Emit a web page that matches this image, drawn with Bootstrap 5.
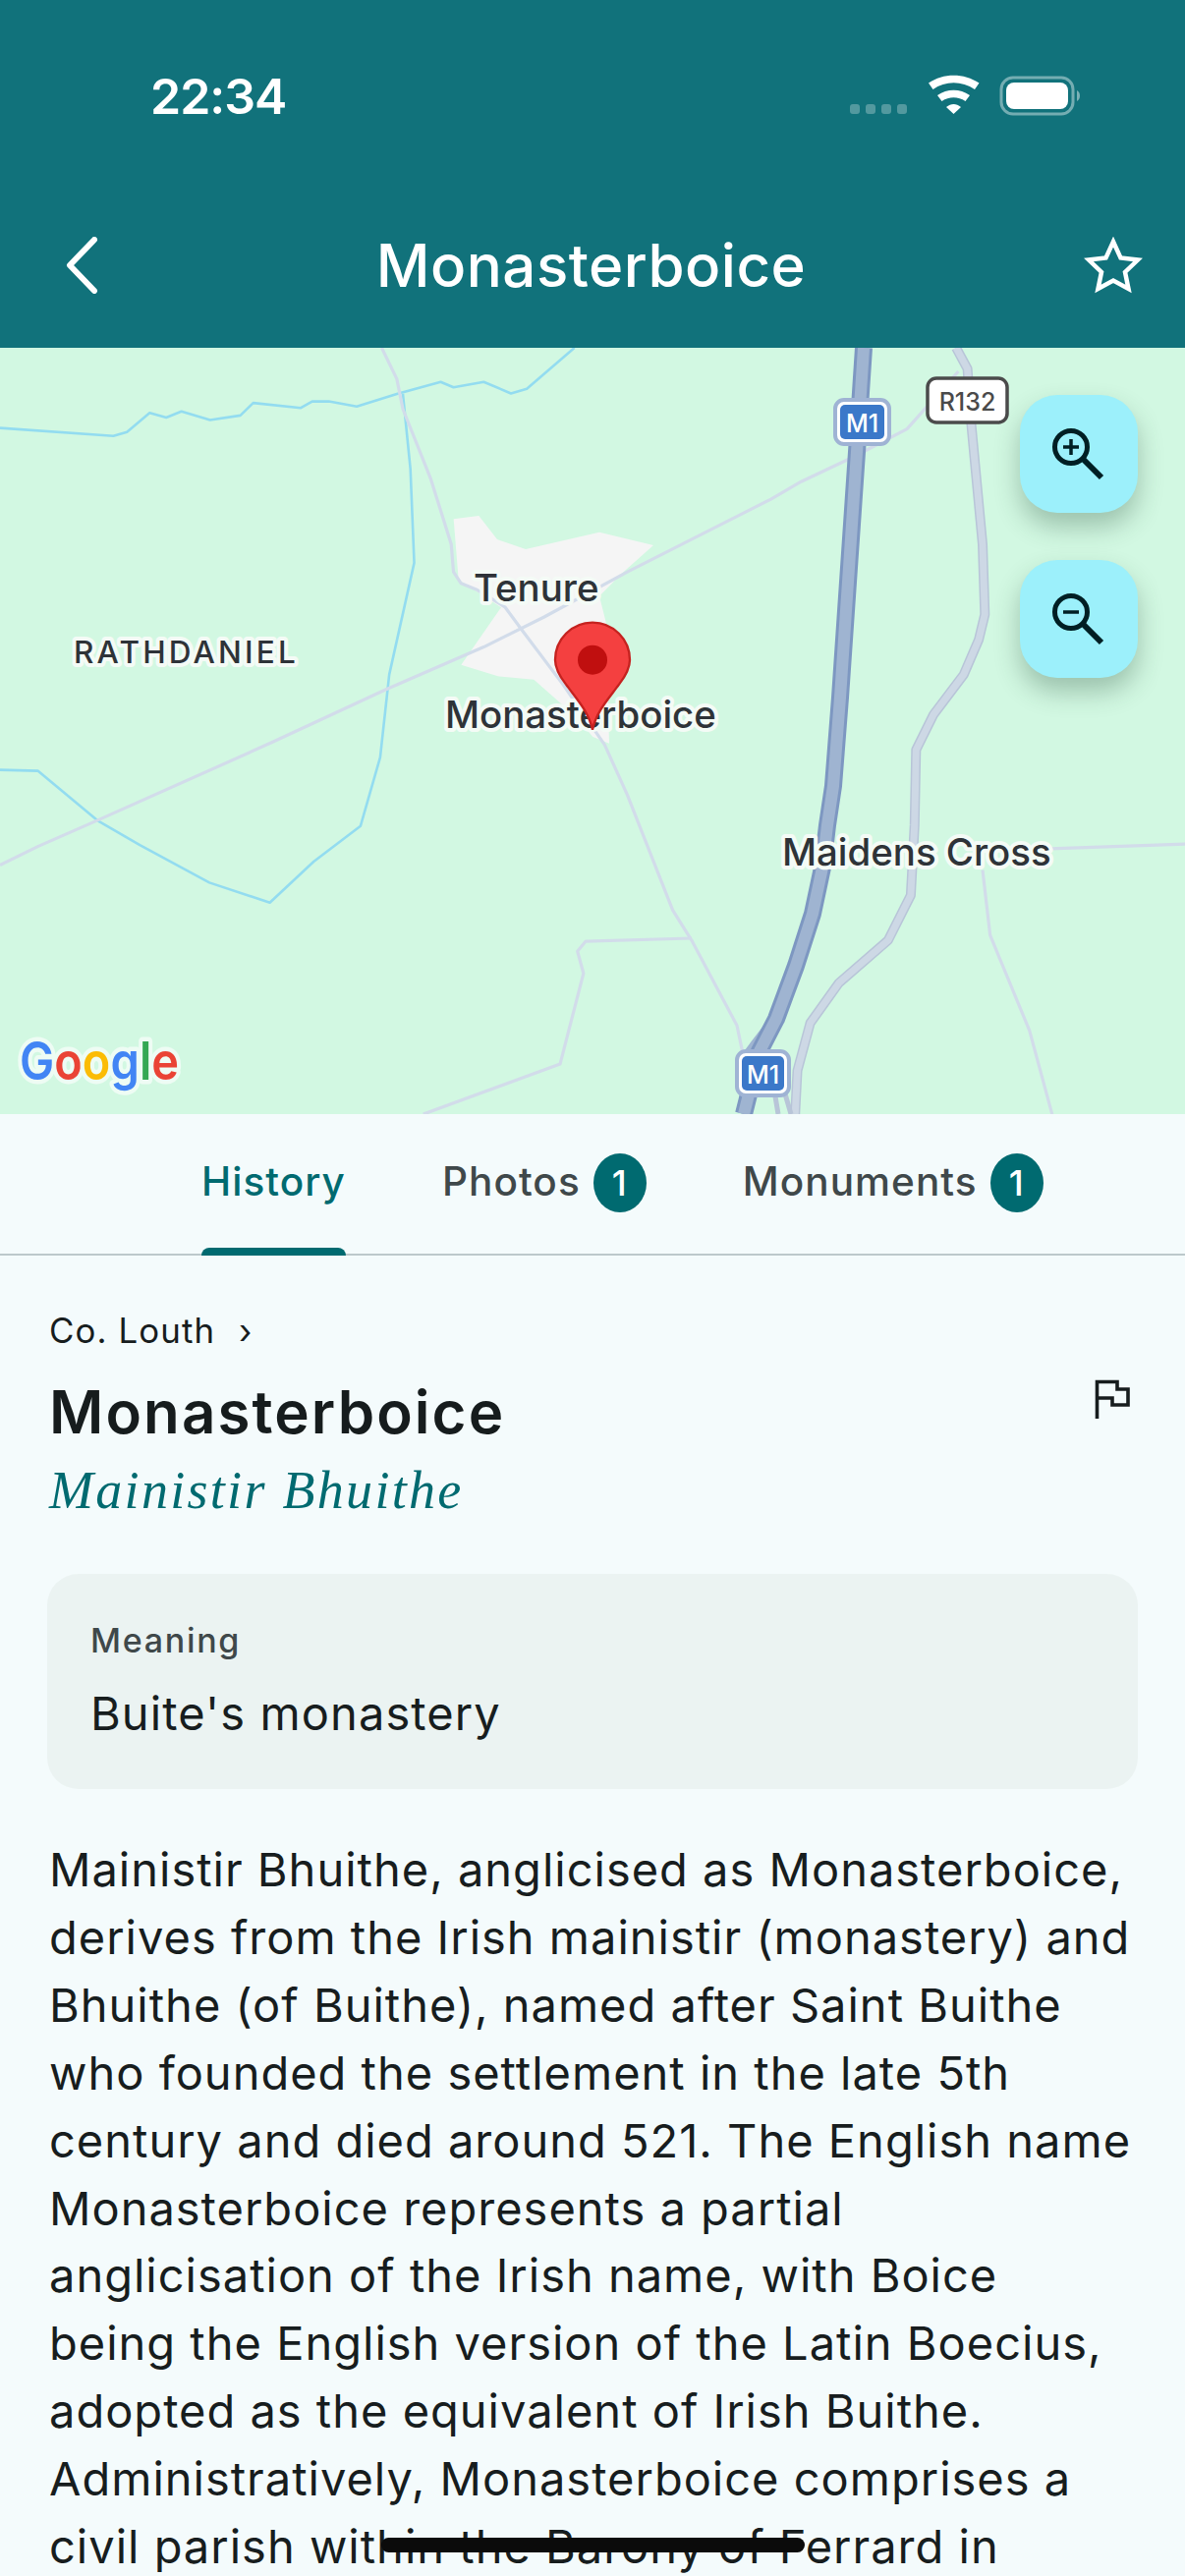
<!DOCTYPE html>
<html lang="en">
<head>
<meta charset="utf-8">
<title>Monasterboice</title>
<link href="https://cdn.jsdelivr.net/npm/bootstrap@5.3.0/dist/css/bootstrap.min.css" rel="stylesheet">
<script src="https://cdn.jsdelivr.net/npm/bootstrap@5.3.0/dist/js/bootstrap.bundle.min.js"></script>
<style>
html,body{margin:0;height:2622px;overflow:hidden}
body{width:1206px;background:#f4fbfc;font-family:Inter,"Liberation Sans",sans-serif;color:#171d1e;position:relative}
.app-head{height:354px;background:#11727b;color:#fff;padding:0}
.status-row{height:196px;padding:74px 103px 0 153px}
.status-time{font-size:50px;line-height:48px;font-weight:600;letter-spacing:-1px}
.status-icons{width:240px;height:44px}
.title-row{height:158px;padding:0 43px 0 66px;margin-top:-5px}
.app-title{font-size:60px;font-weight:500;letter-spacing:.5px;line-height:1}
.map-wrap{height:780px;background:#d2f8e2;position:relative;overflow:hidden}
.map-svg{position:absolute;left:0;top:0}
.map-label{font-family:Inter,sans-serif;font-weight:500;fill:#2e3338;stroke:#f4fbf6;stroke-width:8px;paint-order:stroke;stroke-linejoin:round}
.zoom-col{position:absolute;top:48px;right:48px;gap:48px}
.zoom-btn{width:120px;height:120px;border-radius:38px;background:#9cf0fb;border:0;padding:0;box-shadow:0 14px 26px rgba(30,70,50,.3)}
.zoom-btn:hover{background:#9cf0fb}
.tab-bar{height:144px;border-bottom:2px solid #bcc8cb;padding-left:205px;gap:0}
.tab-item{height:142px;position:relative;color:#3f484a;font-size:40.5px;font-weight:500;letter-spacing:1.05px;text-decoration:none;padding:0 0 3px}
.tab-item.on{color:#006a70}
.tab-item.on::after{content:"";position:absolute;left:0;right:0;bottom:-2px;height:8px;background:#006a70;border-radius:8px 8px 0 0}
.tab-photos{margin-left:98px}
.tab-mon{margin-left:98px}
.count-pill{width:54px;height:60px;border-radius:50%;background:#006a70;color:#fff;font-size:36px;font-weight:500;margin-left:13px;padding:0;display:flex;align-items:center;justify-content:center}
.place{padding:0 48px 0 50px}
.crumb{font-size:34.8px;letter-spacing:1.1px;line-height:44px;margin-top:54px;color:#171d1e}
.crumb-sep{margin-left:24px}
.place-name{font-size:60px;font-weight:600;letter-spacing:2.1px;line-height:70px;margin:26px 0 0;color:#161c1d}
.irish-name{font-family:"Liberation Serif",serif;font-style:italic;font-size:54px;line-height:70px;color:#006a70;letter-spacing:2.3px;margin-top:10px}
.flag-ico{margin-top:28px;margin-right:8px}
.mean-box{margin:50px 0 0 -2px;height:219px;border-radius:32px;background:#ebf3f2;border:0;padding:48px 44px 0}
.mean-key{font-size:34px;letter-spacing:1.7px;line-height:40px;font-weight:500;color:#3f484a}
.mean-val{font-size:47px;letter-spacing:1.1px;line-height:56px;margin-top:26px;color:#171d1e}
.story{font-size:47px;line-height:68.9px;letter-spacing:1px;margin:48px 0 0;color:#171d1e}
.home-bar{position:absolute;left:388px;top:2583px;width:431px;height:15px;border-radius:8px;background:#0b0b0b}
</style>
</head>
<body>
<header class="app-head">
  <div class="status-row d-flex justify-content-between align-items-start">
    <div class="status-time">22:34</div>
    <svg class="status-icons" viewBox="0 0 240 44" aria-hidden="true">
      <g fill="#fff" fill-opacity=".28">
        <rect x="2" y="32" width="10" height="10" rx="3"/><rect x="18" y="32" width="10" height="10" rx="3"/><rect x="34" y="32" width="10" height="10" rx="3"/><rect x="50" y="32" width="10" height="10" rx="3"/>
      </g>
      <g fill="#fff" transform="translate(0,-74)">
        <path d="M945 84.5 C960 74 981 74 996.500 84.500 L992 91 C979 82 962 82 949.500 91Z" transform="translate(-863,0)"/>
        <path d="M954 97 C964 90 977 90 987 97 L982.500 103 C975 98 966 98 958.500 103Z" transform="translate(-863,0)"/>
        <path d="M963 109 C968 105 973 105 978 109 L970.500 116Z" transform="translate(-863,0)"/>
      </g>
      <rect x="156" y="5" width="73" height="37" rx="12" fill="none" stroke="#fff" stroke-opacity=".42" stroke-width="3"/>
      <rect x="161" y="10" width="63" height="27" rx="8" fill="#fff"/>
      <path d="M233 18 C237 20 237 27 233 29Z" fill="#fff" fill-opacity=".45"/>
    </svg>
  </div>
  <nav class="title-row d-flex justify-content-between align-items-center">
    <svg width="34" height="58" viewBox="0 0 34 58" aria-hidden="true"><path d="M30 3 L5 29 L30 55" fill="none" stroke="#fff" stroke-width="6" stroke-linecap="round" stroke-linejoin="round"/></svg>
    <div class="app-title">Monasterboice</div>
    <svg width="60" height="58" viewBox="0 0 60 58" aria-hidden="true"><path d="M30 5 L37.500 21.500 L55 23.500 L42 36 L45.500 53 L30 44.500 L14.500 53 L18 36 L5 23.500 L22.500 21.500Z" fill="none" stroke="#fff" stroke-width="4.500" stroke-linejoin="miter"/></svg>
  </nav>
</header>

<section class="map-wrap">
  <svg class="map-svg" width="1206" height="780" viewBox="0 0 1206 780" aria-label="Map">
    <g transform="translate(400,146) scale(.33333)">
      <path fill="#f5f5f5" d="M185 85 L262 75 L318 147 L405 177 L630 125 L795 165 L700 250 L630 320 L650 400 L660 770 L610 750 L560 690 L430 575 L320 565 L208 530 L330 355 L200 270Z"/>
    </g>
    <g transform="scale(.76923,.51020) translate(0,-8)" fill="none" stroke-linejoin="round">
      <g stroke="#93dcf0" stroke-width="2.600">
        <path vector-effect="non-scaling-stroke" d="M0 168 L150 184 L168 176 L198 138 L220 147 L240 135 L278 152 L318 143 L335 118 L398 128 L413 115 L435 115 L472 125 L525 100 L583 76 L600 87 L640 76 L676 99 L697 90 L760 8"/>
        <path vector-effect="non-scaling-stroke" d="M533 100 L543 250 L548 437 L515 660 L503 825 L477 962 L415 1033 L357 1115 L277 1075 L185 1000 L130 952 L50 852 L0 850"/>
      </g>
      <g stroke="#d2dcea" stroke-width="3.200">
        <path vector-effect="non-scaling-stroke" d="M505 8 L525 70 L533 130 L570 270 L597 400 L600 455 L610 478 L630 490 L668 525 L690 570 L745 680 L800 800 L830 900 L890 1130 L915 1190 L975 1360 L982 1410"/>
        <path vector-effect="non-scaling-stroke" d="M0 1040 L50 1003 L130 950 L360 795 L510 690 L640 605 L720 545 L830 455 L1020 310 L1060 275 L1130 225 L1200 170 L1268 55"/>
        <path vector-effect="non-scaling-stroke" d="M1380 1008 L1568 998"/>
        <path vector-effect="non-scaling-stroke" d="M915 1186 L775 1192 L764 1212 L772 1256 L741 1437 L560 1537"/>
        <path vector-effect="non-scaling-stroke" d="M1300 1050 L1310 1180 L1362 1370 L1392 1537"/>
      </g>
      <g>
        <path vector-effect="non-scaling-stroke" stroke="#b8c5d8" stroke-width="10" d="M1265 8 L1280 50 L1285 160 L1300 400 L1303 540 L1295 590 L1275 660 L1235 740 L1212 810 L1210 960 L1205 1100 L1175 1190 L1110 1275 L1072 1355 L1055 1450 L1052 1537"/>
        <path vector-effect="non-scaling-stroke" stroke="#cdd8e5" stroke-width="7" d="M1265 8 L1280 50 L1285 160 L1300 400 L1303 540 L1295 590 L1275 660 L1235 740 L1212 810 L1210 960 L1205 1100 L1175 1190 L1110 1275 L1072 1355 L1055 1450 L1052 1537"/>
      </g>
    </g>
    <g transform="translate(0,-354)" fill="none" stroke-linejoin="round">
      <path stroke="#b8c5d8" stroke-width="5" d="M788 1110 L792 1134 M798 1110 L805 1134"/>
      <path stroke="#9fb4d1" stroke-width="7" d="M760 1072 L782 1043 L797 1020"/>
      <path stroke="#7d97c1" stroke-width="18" d="M879 354 L872 460 L855 710 L848 800 L842 840 L837 883 L827 930 L810 983 L790 1037 L773 1070 L757 1134"/>
      <path stroke="#9fb4d1" stroke-width="12" d="M879 354 L872 460 L855 710 L848 800 L842 840 L837 883 L827 930 L810 983 L790 1037 L773 1070 L757 1134"/>
    </g>
    <text class="map-label" x="75" y="321" font-size="31.500" letter-spacing="2.200" textLength="228">RATHDANIEL</text>
    <text class="map-label" x="482" y="258" font-size="38.400">Tenure</text>
    <text class="map-label" x="453" y="387" font-size="38.400">Monasterboice</text>
    <text class="map-label" x="796" y="527" font-size="38.400">Maidens Cross</text>

    <g>
      <rect x="850" y="53" width="55" height="45" rx="9" fill="#fff" stroke="#9fb3d4" stroke-width="4"/>
      <rect x="855" y="58" width="45" height="35" rx="5" fill="#3b78c9"/>
      <text x="877.500" y="86" text-anchor="middle" font-family="Inter,sans-serif" font-size="25" font-weight="500" fill="#fff">M1</text>
      <rect x="750" y="716" width="53" height="45" rx="9" fill="#fff" stroke="#9fb3d4" stroke-width="4"/>
      <rect x="755" y="721" width="43" height="35" rx="5" fill="#3b78c9"/>
      <text x="776.500" y="749" text-anchor="middle" font-family="Inter,sans-serif" font-size="25" font-weight="500" fill="#fff">M1</text>
      <rect x="944" y="31" width="81" height="45" rx="9" fill="#fff" stroke="#4b4b4b" stroke-width="3.500"/>
      <text x="984.500" y="64" text-anchor="middle" font-family="Inter,sans-serif" font-size="25" font-weight="500" fill="#4a4a4a">R132</text>
    </g>

    <g transform="translate(400,146) scale(.33333)">
      <path fill="#f44040" stroke="#c5221f" stroke-width="7" d="M609 728 C597 672 560 634 528 590 C505 560 495 540 495 515 A114 114 0 0 1 723 515 C723 540 713 560 690 590 C658 634 621 672 609 728Z"/>
      <circle cx="609" cy="515" r="45" fill="#c00f0f"/>
    </g>

    <text x="20" y="745" font-family="Inter,sans-serif" font-size="53" font-weight="600" stroke="#eefcf4" stroke-width="9" paint-order="stroke" stroke-linejoin="round" textLength="162" lengthAdjust="spacingAndGlyphs"><tspan fill="#4285f4">G</tspan><tspan fill="#ea4335">o</tspan><tspan fill="#fbbc05">o</tspan><tspan fill="#4285f4">g</tspan><tspan fill="#34a853">l</tspan><tspan fill="#ea4335">e</tspan></text>
  </svg>
  <div class="zoom-col d-flex flex-column">
    <button class="btn zoom-btn d-flex align-items-center justify-content-center" type="button" aria-label="Zoom in">
      <svg width="120" height="120" viewBox="0 0 120 120" aria-hidden="true"><g fill="none" stroke="#001f24" stroke-width="5"><circle cx="52" cy="53" r="16.500"/><path d="M64 65 L83 84" stroke-width="6"/><path d="M44 53 H60 M52 45 V61" stroke-width="3.500"/></g></svg>
    </button>
    <button class="btn zoom-btn d-flex align-items-center justify-content-center" type="button" aria-label="Zoom out">
      <svg width="120" height="120" viewBox="0 0 120 120" aria-hidden="true"><g fill="none" stroke="#001f24" stroke-width="5"><circle cx="52" cy="53" r="16.500"/><path d="M64 65 L83 84" stroke-width="6"/><path d="M44 53 H60" stroke-width="3.500"/></g></svg>
    </button>
  </div>
</section>

<div class="nav tab-bar align-items-stretch">
  <a class="tab-item on d-flex align-items-center" href="#">History</a>
  <a class="tab-item tab-photos d-flex align-items-center" href="#">Photos<span class="badge count-pill">1</span></a>
  <a class="tab-item tab-mon d-flex align-items-center" href="#">Monuments<span class="badge count-pill">1</span></a>
</div>

<main class="place">
  <div class="crumb">Co. Louth<span class="crumb-sep">›</span></div>
  <div class="d-flex justify-content-between align-items-start">
    <div>
      <h1 class="place-name">Monasterboice</h1>
      <div class="irish-name">Mainistir Bhuithe</div>
    </div>
    <svg class="flag-ico" width="36" height="40" viewBox="0 0 36 40" aria-hidden="true"><path d="M2.500 40 V2.500 H23 V10 H34 V26 H18 V19 H2.500" fill="none" stroke="#171d1e" stroke-width="3.600"/></svg>
  </div>
  <div class="card mean-box">
    <div class="mean-key">Meaning</div>
    <div class="mean-val">Buite's monastery</div>
  </div>
  <p class="story">Mainistir Bhuithe, anglicised as Monasterboice, derives from the Irish mainistir (monastery) and Bhuithe (of Buithe), named after Saint Buithe who founded the settlement in the late 5th century and died around 521. The English name Monasterboice represents a partial anglicisation of the Irish name, with Boice being the English version of the Latin Boecius, adopted as the equivalent of Irish Buithe. Administratively, Monasterboice comprises a civil parish within the Barony of Ferrard in</p>
</main>
<div class="home-bar"></div>
</body>
</html>
